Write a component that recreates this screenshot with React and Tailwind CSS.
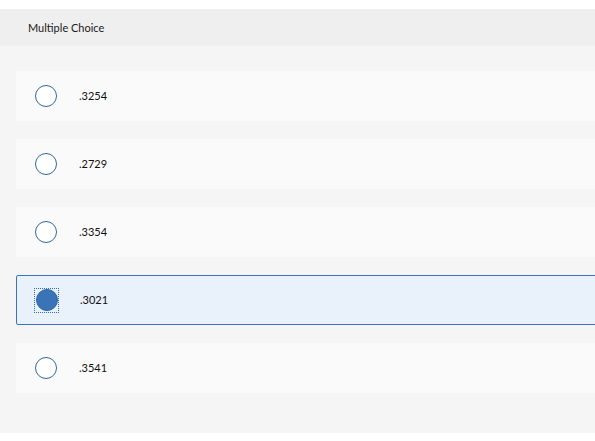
import React, { useState } from "react";

const options = [".3254", ".2729", ".3354", ".3021", ".3541"];

function App() {
  const [picked, setPicked] = useState(3);

  return (
    <div
      className="w-[595px] h-[441px] overflow-hidden bg-white pt-[9px]"
      style={{ fontFamily: "Lato, 'Open Sans', sans-serif" }}
    >
      <div className="h-[37px] bg-[#efefef] flex items-center pl-[28px] pt-[2px] text-[11px] text-[#1a1a1a]">
        Multiple Choice
      </div>
      <div className="bg-[#f5f5f5] h-[387px] pt-[25px] pl-[16px] flex flex-col gap-[18px]">
        {options.map((opt, i) => {
          const on = picked === i;
          return (
            <div
              key={i}
              onClick={() => setPicked(i)}
              className={
                on
                  ? "w-[600px] h-[50px] shrink-0 flex items-center bg-[#e9f1fb] border border-[#3a75bb] rounded-[2px] pl-[18px]"
                  : "w-[600px] h-[50px] shrink-0 flex items-center bg-[#fafafa] pl-[19px]"
              }
            >
              {on ? (
                <span className="w-[23px] h-[23px] flex items-center justify-center outline outline-1 outline-dotted outline-[#2f6ad0]">
                  <span className="w-[22px] h-[22px] rounded-full bg-[#3b74b6] border border-[#2f65a3]" />
                </span>
              ) : (
                <span className="w-[22px] h-[22px] rounded-full border-[1.5px] border-[#2f67a6] bg-white" />
              )}
              <span className="ml-[22px] text-[11px] text-[#111]">{opt}</span>
            </div>
          );
        })}
      </div>
    </div>
  );
}

export default App;
